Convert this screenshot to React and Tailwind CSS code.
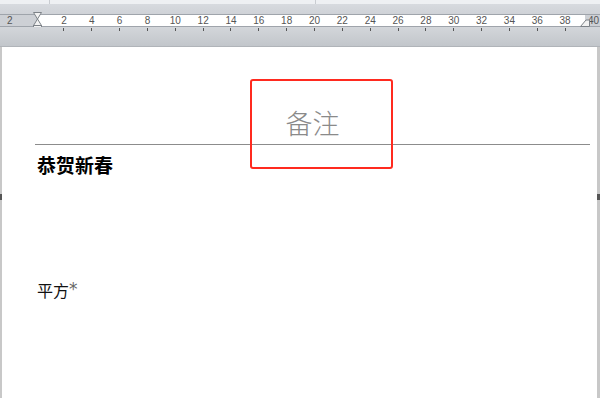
export default function App() {
  const nums = [2, 4, 6, 8, 10, 12, 14, 16, 18, 20, 22, 24, 26, 28, 30, 32, 34, 36, 38];
  return (
    <div className="w-[600px] h-[398px] overflow-hidden bg-white flex flex-col" style={{ fontFamily: '"Liberation Sans", "Noto Sans CJK SC", sans-serif' }}>
      {/* top strip */}
      <div className="h-[4px] bg-[#eef0f3] flex">
        <div className="w-[50px] border-r border-[#c9ccd1]" />
        <div className="w-[266px] border-r border-[#c9ccd1]" />
      </div>
      <div className="h-[10px] bg-gradient-to-b from-[#d7dadf] to-[#cfd2d7]" />
      {/* ruler strip */}
      <div className="relative h-[13px] bg-[#cdd0d5] border-y border-[#9fa4ab] flex">
        <div className="w-[37px] flex items-center pl-[7px] text-[10px] leading-none text-[#555]">2</div>
        <div className="w-[548px] bg-white" />
        <div className="flex-1 flex items-center justify-end pr-[1px] text-[10px] leading-none text-[#555]">40</div>
        {/* numbers */}
        <div className="absolute left-[50px] top-0 h-full flex">
          {nums.map((n) => (
            <div key={n} className="w-[27.85px] flex items-center justify-center text-[10px] leading-none text-[#555]">{n}</div>
          ))}
        </div>
        {/* left hourglass marker */}
        <div className="absolute left-[33px] top-[-3px] w-[9px] flex flex-col items-center">
          <svg width="9" height="20" viewBox="0 0 9 20">
            <path d="M0.5 0.5 H8.5 L4.5 7 Z" fill="#f2f2f2" stroke="#7d8288" />
            <path d="M4.5 7 L8.5 13.5 H0.5 Z" fill="#f2f2f2" stroke="#7d8288" />
            <rect x="0.5" y="13.5" width="8" height="6" fill="#f2f2f2" stroke="#7d8288" />
          </svg>
        </div>
        {/* right marker */}
        <div className="absolute left-[580px] top-[2px]">
          <svg width="10" height="10" viewBox="0 0 10 10">
            <path d="M0.5 9.5 L6 3 H9.5 V9.5 Z" fill="#f2f2f2" stroke="#7d8288" />
          </svg>
        </div>
      </div>
      {/* below ruler */}
      <div className="h-[20px] bg-gradient-to-b from-[#d3d6da] to-[#c2c6cb] border-b border-[#b0b4b9] relative">
        <div className="absolute left-[50px] top-[1px] flex">
          {nums.map((n) => (
            <div key={n} className="w-[27.85px] flex justify-center">
              <div className="w-px h-[3px] bg-[#555]" />
            </div>
          ))}
        </div>
      </div>
      {/* page */}
      <div className="relative flex-1 border-l-2 border-r-[3px] border-[#c8c8c8] bg-white">
        <div className="absolute left-[-2px] top-[147px] w-[2px] h-[6px] bg-[#555]" />
        <div className="absolute right-[-3px] top-[147px] w-[3px] h-[6px] bg-[#555]" />
        <div className="flex flex-col pl-[33px] pr-[7px]">
          <div className="h-[97px] flex items-end justify-center">
            <span className="text-[27px] leading-none text-[#8a8a8a] font-light mb-[8px]" style={{ fontFamily: '"Noto Sans CJK SC", serif' }}>备注</span>
          </div>
          <div className="h-px bg-[#8c8c8c]" />
          <div className="pl-[2px] mt-[10px] text-[19px] leading-none font-bold text-black" style={{ fontFamily: '"Noto Sans CJK SC", sans-serif' }}>恭贺新春</div>
          <div className="pl-[2px] mt-[108px] flex items-start text-[16px] leading-none text-[#111]" style={{ fontFamily: '"Noto Sans CJK SC", sans-serif' }}>
            平方<span className="text-[17px] text-[#666] mt-[-1px]" style={{ fontFamily: '"DejaVu Sans", sans-serif' }}>*</span>
          </div>
        </div>
        {/* red annotation box */}
        <div className="absolute left-[248px] top-[32px] w-[143px] h-[90px] border-2 border-[#ff2a1f] rounded-[3px]" />
      </div>
    </div>
  );
}
